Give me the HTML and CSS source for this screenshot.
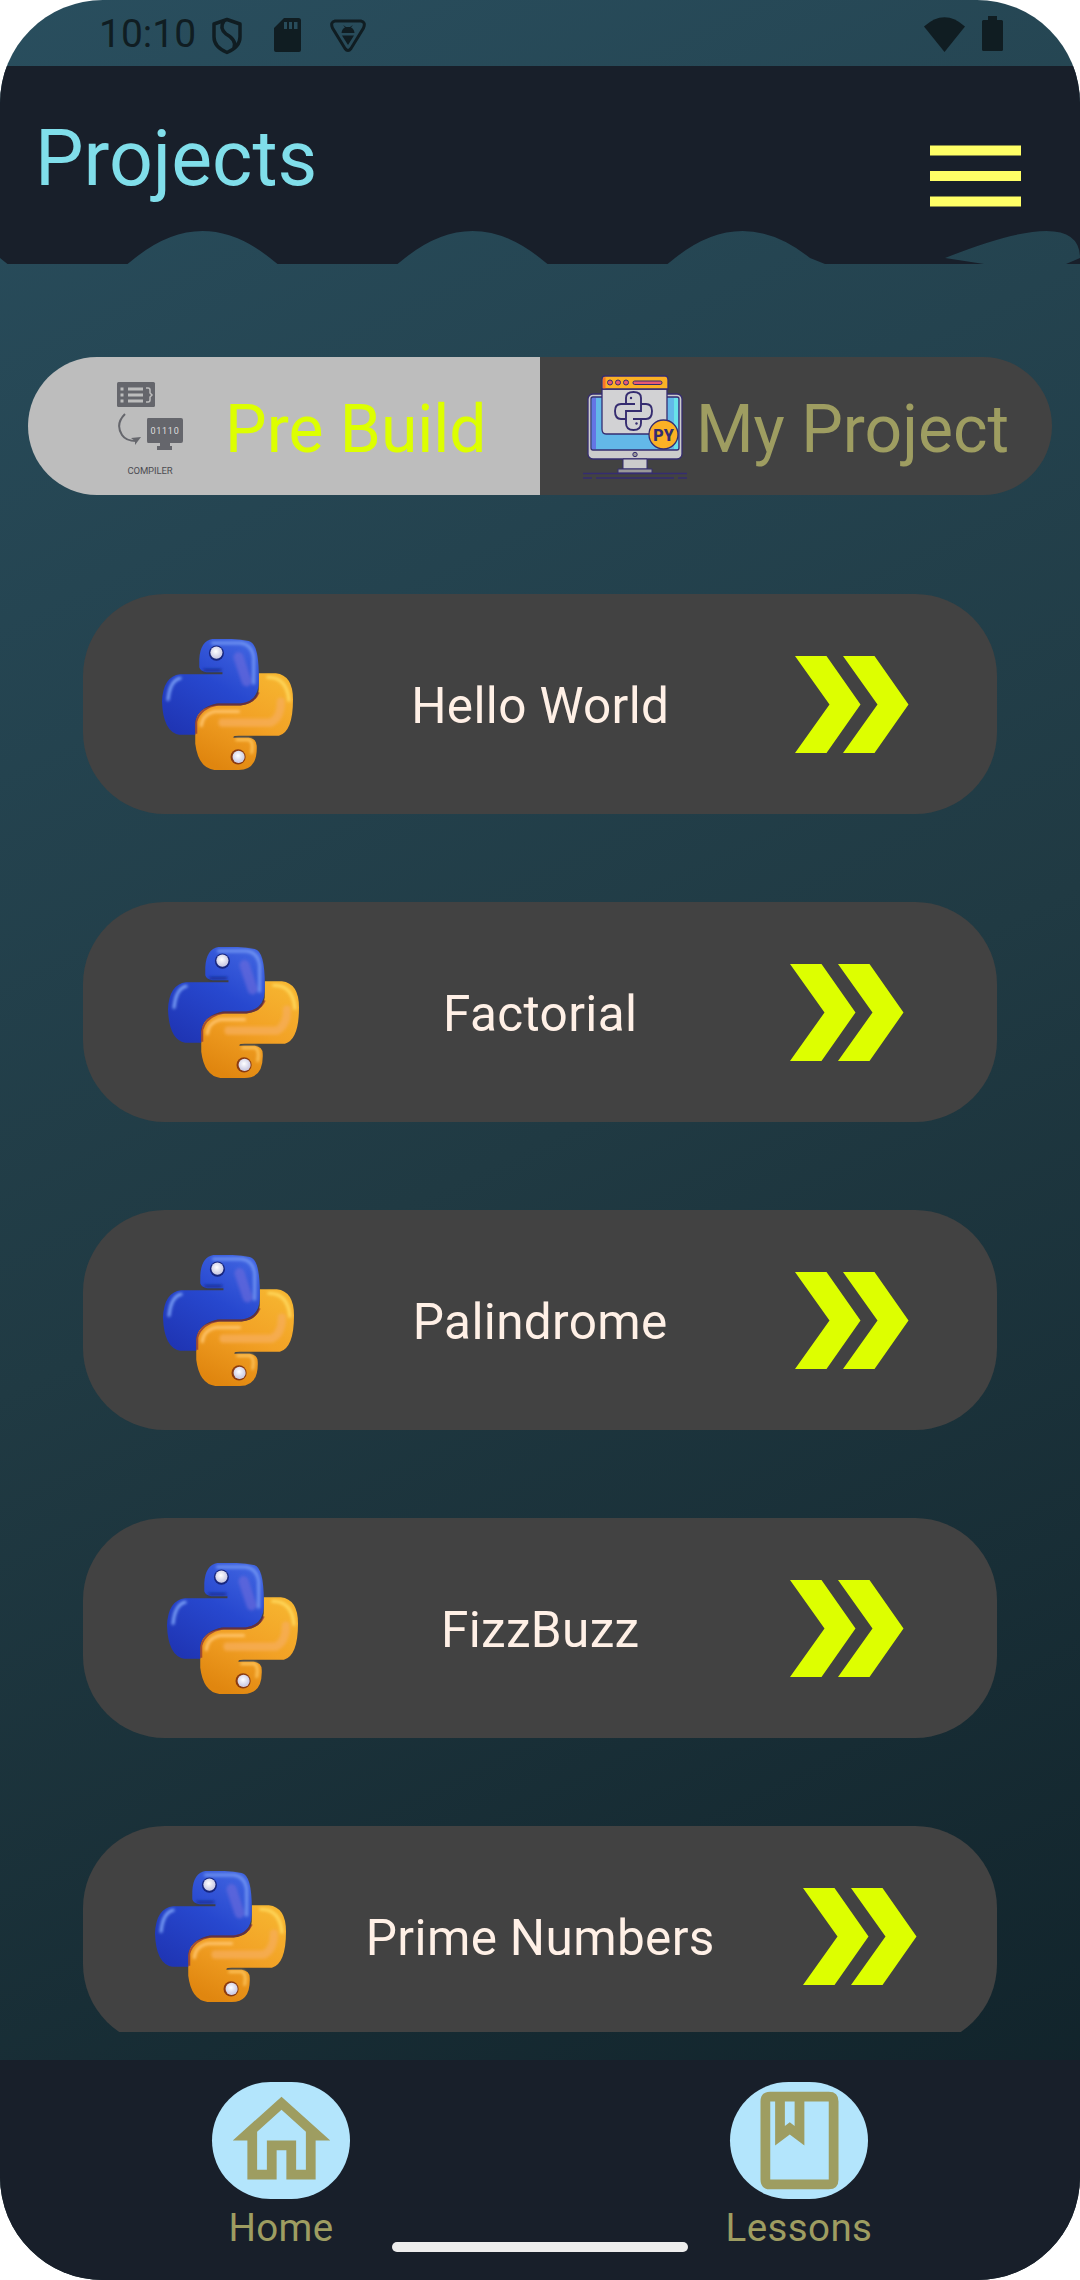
FILE: index.html
```html
<!DOCTYPE html>
<html lang="en">
<head>
<meta charset="utf-8">
<title>Projects</title>
<link rel="stylesheet" href="styles.css">
</head>
<body>
<svg class="defs" width="0" height="0" aria-hidden="true">
  <defs>
    <linearGradient id="blue" x1="0.8" y1="0" x2="0.2" y2="1">
      <stop offset="0" stop-color="#3f63e0"/><stop offset="0.45" stop-color="#2748cf"/><stop offset="1" stop-color="#1f35b4"/>
    </linearGradient>
    <linearGradient id="gold" x1="0.8" y1="0" x2="0.3" y2="1">
      <stop offset="0" stop-color="#f6b530"/><stop offset="0.5" stop-color="#f2a125"/><stop offset="1" stop-color="#e0860f"/>
    </linearGradient>
    <radialGradient id="pearl" cx="0.45" cy="0.4"><stop offset="0" stop-color="#fff"/><stop offset="1" stop-color="#cfcfe6"/></radialGradient>
    <filter id="soft" x="-20%" y="-20%" width="140%" height="140%"><feGaussianBlur stdDeviation="1.6"/></filter>
    <symbol id="python" viewBox="0 0 130 130">
      <path d="M96 34H113Q130 36 130 60Q130 92 116 96H76Q70 96 71 98H86Q94 99 94 106Q95 130 76 130H52Q36 128 33 104V84Q34 68 54 66H78Q95 64 96 50Z" fill="url(#gold)"/>
      <path d="M50 0Q38 2 37 20V28Q38 32 44 33H60V35H18Q1 37 0 62Q1 92 17 95H33V82Q36 68 54 64H78Q95 62 96 44Q97 4 86 2Q70-1 50 0Z" fill="url(#blue)"/>
      <path d="M34 94V82Q38 68 56 65H78Q92 63 96 53" fill="none" stroke="#7c263f" stroke-width="2" opacity=".65"/>
      <g fill="none" stroke-linecap="round" filter="url(#soft)">
        <path d="M6 60Q8 41 18 39" stroke="#7da2f7" stroke-width="3"/>
        <path d="M50 4H78Q89 5 91 18V44" stroke="#7194f2" stroke-width="3"/>
        <path d="M76 18L84 42" stroke="#6768dc" stroke-width="10" opacity=".7"/>
        <path d="M60 83H108Q118 78 118 62" stroke="#f6ad55" stroke-width="8" opacity=".8"/>
        <path d="M39 86Q40 75 52 72H76" stroke="#ffc46c" stroke-width="3"/>
        <path d="M105 38Q124 38 126 61" stroke="#ffd95d" stroke-width="3"/>
        <path d="M74 100H87Q91 103 89 113" stroke="#ffc860" stroke-width="2.500"/>
        <path d="M42 31H58" stroke="#15247f" stroke-width="2"/>
      </g>
      <circle cx="54" cy="14" r="7.500" fill="#17267f"/><circle cx="54" cy="13.500" r="6" fill="url(#pearl)"/>
      <circle cx="75.500" cy="117" r="7.500" fill="#8b3b10"/><circle cx="76" cy="117" r="6" fill="url(#pearl)"/>
    </symbol>
    <symbol id="chevrons" viewBox="0 0 114 97">
      <path d="M0 0H31.500L65.500 48.500L31.500 97H0L34.500 48.500ZM48 0H79.500L113.500 48.500L79.500 97H48L82.500 48.500Z" fill="#df0"/>
    </symbol>
  </defs>
</svg>
<div class="screen">
  <div class="status">
    <span class="clock">10:10</span>
    <svg class="shield" viewBox="0 0 30 38" width="30" height="38" fill="none" stroke="#101d22" stroke-width="3.500" stroke-linejoin="round"><path d="M15 2.500L28 7V20Q28 30 15 35.500Q2 30 2 20V7Z"/><path d="M12 4Q7 11 14 17Q25 23 22 31"/></svg>
    <svg class="sd" viewBox="0 0 27 34" width="27" height="34"><path fill="#101d22" fill-rule="evenodd" d="M10 0H24.500Q27 0 27 2.500V32Q27 34 25 34H2Q0 34 0 32V10ZM10 4V11H13V4ZM15 4V11H18V4ZM20 4V11H23.500V4Z"/></svg>
    <svg class="tri" viewBox="0 0 36 34" width="36" height="34"><path d="M5 2H31Q36 3 33.500 9L21 29.500Q18 33.500 15 29.500L2.500 9Q0 3 5 2Z" fill="none" stroke="#101d22" stroke-width="3"/><path d="M11.500 14Q12 9.500 15 8.500L13 6L16 8H20L23 6L21 8.500Q24 9.500 24.500 14ZM12 16.500H24L18 26Z" fill="#101d22"/></svg>
    <svg class="wifi" viewBox="0 0 41 35" width="41" height="35"><path d="M0 9.500Q20.500-9 41 9.500L20.500 35Z" fill="#101d22"/></svg>
    <svg class="battery" viewBox="0 0 21 35" width="21" height="35"><path d="M6 0H15V4H19.500Q21 4 21 5.500V33.500Q21 35 19.500 35H1.500Q0 35 0 33.500V5.500Q0 4 1.500 4H6Z" fill="#101d22"/></svg>
  </div>
  <header class="header">
    <svg class="waves" viewBox="0 0 1080 198" width="1080" height="198"><path fill="#181f2a" d="M0 0H1080V192Q1080 138 945 192L984 198H825L810 192Q742.500 138 675 192L667.500 198H547.500L540 192Q472.500 138 405 192L397.500 198H277.500L270 192Q202.500 138 135 192L127.500 198H7.500L0 192ZM1080 192V198H1066Z"/></svg>
    <h1 class="title">Projects</h1>
    <svg class="menu" viewBox="0 0 91 62" width="91" height="62"><path d="M0 0.500H91V10.500H0ZM0 26H91V36H0ZM0 51.500H91V61.500H0Z" fill="#ff6"/></svg>
  </header>
  <nav class="tabs">
    <div class="tab tab-on">
      <svg class="compiler" viewBox="0 0 66 94" width="66" height="94">
        <rect x="0" y="1" width="38" height="25" rx="1.500" fill="#65666c"/>
        <path d="M11 8H26M11 14H26M11 20H26" stroke="#bdbdbd" stroke-width="3"/>
        <path d="M5 6.500v3M5 12.500v3M5 18.500v3" stroke="#bdbdbd" stroke-width="3"/>
        <path d="M29 7h2q2 0 2 2v3l2 2-2 2v3q0 2-2 2h-2" fill="none" stroke="#bdbdbd" stroke-width="1.500"/>
        <path d="M8 33Q-2 43 5 54Q9 60 19 60" fill="none" stroke="#65666c" stroke-width="2"/><path d="M14 57L24 56L18 64V60Z" fill="#65666c"/>
        <path d="M31 37H64Q66 37 66 39V60Q66 62 64 62H53V65H55V69H40V65H43V62H31Q30 62 30 60V39Q30 37 31 37Z" fill="#65666c"/>
        <text x="48" y="53" class="bits" text-anchor="middle">01110</text>
        <text x="33" y="92.500" class="caption" text-anchor="middle" textLength="45">COMPILER</text>
      </svg>
      <span>Pre Build</span>
    </div>
    <div class="tab">
      <svg class="pc" viewBox="0 0 104 106" width="104" height="106">
        <rect x="5" y="19" width="94" height="65" rx="5" fill="#ccc" stroke="#352c70" stroke-width="1.300"/>
        <rect x="8" y="22" width="88" height="53" rx="2" fill="#63b8e8" stroke="#352c70" stroke-width="1.300"/>
        <path d="M9 23h4v51H9z" fill="#6475e5"/><path d="M91 23h4v51h-4z" fill="#68e2e9"/>
        <path d="M19 14H84V54Q84 59 80 59H23Q19 59 19 54Z" fill="#d2d2d4" stroke="#352c70" stroke-width="1.300"/>
        <path d="M22 1H82Q85 1 85 5V14H19V5Q19 1 22 1Z" fill="#fbb125" stroke="#352c70" stroke-width="1.300"/>
        <path d="M20 4.500Q20 2 22.500 2V13.300H20Z" fill="#f9722d"/>
        <g fill="#e85b72" stroke="#352c70"><circle cx="27" cy="7.500" r="2.500"/><circle cx="35" cy="7.500" r="2.500"/><circle cx="43" cy="7.500" r="2.500"/><rect x="50" y="6" width="29" height="3.500" rx="1.700"/></g>
        <g fill="none" stroke="#352c70" stroke-width="1.900"><path d="M52 29H38Q32 29 32 36Q32 44 38 44H43M43 29V23Q43 17 50.500 17Q58 17 58 23V36H43V48Q43 55 50.500 55Q58 55 58 48V44M50 44H63Q69 44 69 36Q69 29 63 29H58"/></g>
        <circle cx="48" cy="23" r="1.200" fill="#352c70"/><circle cx="53.500" cy="48.500" r="1.200" fill="#352c70"/>
        <circle cx="80.500" cy="59.500" r="14.500" fill="#fbb125" stroke="#352c70" stroke-width="1.300"/>
        <text x="80.500" y="65.500" class="py" text-anchor="middle">PY</text>
        <circle cx="52" cy="79.500" r="2.200" fill="#999" stroke="#352c70"/>
        <path d="M40 84H64V94H40Z" fill="#ccc" stroke="#352c70"/><path d="M35 94H69V98H35Z" fill="#999" stroke="#352c70"/>
        <path d="M0 98.500H104M0 103H9M13 103H91M95 103H104" stroke="#352c70" stroke-width="1.500"/>
      </svg>
      <span>My Project</span>
    </div>
  </nav>
  <main class="list">
    <article class="card"><svg class="snake"><use href="#python"/></svg><span class="name">Hello World</span><svg class="go"><use href="#chevrons"/></svg></article>
    <article class="card"><svg class="snake"><use href="#python"/></svg><span class="name">Factorial</span><svg class="go"><use href="#chevrons"/></svg></article>
    <article class="card"><svg class="snake"><use href="#python"/></svg><span class="name">Palindrome</span><svg class="go"><use href="#chevrons"/></svg></article>
    <article class="card"><svg class="snake"><use href="#python"/></svg><span class="name">FizzBuzz</span><svg class="go"><use href="#chevrons"/></svg></article>
    <article class="card"><svg class="snake"><use href="#python"/></svg><span class="name">Prime Numbers</span><svg class="go"><use href="#chevrons"/></svg></article>
  </main>
  <footer class="footer">
    <div class="dest"><div class="pill"><svg viewBox="0 0 24 24" width="117" height="117"><path fill="#9e9d61" d="M12 5.690l5 4.500V18h-2v-6H9v6H7v-7.810l5-4.500M12 3L2 12h3v8h6v-6h2v6h6v-8h3L12 3z"/></svg></div><span>Home</span></div>
    <div class="dest"><div class="pill"><svg viewBox="0 0 24 24" width="117" height="117"><path fill="#9e9d61" fill-rule="evenodd" d="M6 2H18Q20 2 20 4V20Q20 22 18 22H6Q4 22 4 20V4Q4 2 6 2ZM6 4V20H18V4H13V13L10 10.750L7 13V4ZM9 4V9L10 8.250L11 9V4Z"/></svg></div><span>Lessons</span></div>
    <div class="handle"></div>
  </footer>
</div>
</body>
</html>
```
FILE: styles.css
```css
* { box-sizing: border-box; }
body { margin: 0; background: #fff; font-family: Roboto, sans-serif; }
svg { display: block; flex: none; }
.defs { position: absolute; }
.screen { width: 1080px; height: 2280px; border-radius: 103px; overflow: hidden; display: flex; flex-direction: column; background: linear-gradient(154.650deg, #294e5e, #203a43 50%, #0f2027); }

.status { height: 66px; flex: none; display: flex; align-items: flex-start; padding-left: 99px; color: #101d22; }
.clock { width: 113px; font-size: 39px; line-height: 46px; margin-top: 11px; white-space: nowrap; }
.shield { margin-top: 17px; }
.sd { margin: 18px 0 0 32px; }
.tri { margin: 19px 0 0 29px; }
.wifi { margin: 17px 0 0 auto; }
.battery { margin: 16px 77px 0 17px; }

.header { height: 198px; flex: none; display: grid; grid-template-columns: 1fr auto; }
.waves { grid-area: 1 / 1 / 2 / 3; }
.title { grid-area: 1 / 1; margin: 47px 0 0 35px; font-size: 77px; line-height: 92px; font-weight: 400; color: #80deea; }
.menu { grid-area: 1 / 2; margin: 79px 59px 0 0; }

.tabs { flex: none; display: flex; height: 138px; margin: 93px 28px 0; border-radius: 69px; overflow: hidden; font-size: 66px; line-height: 78px; color: #9e9d61; }
.tab { flex: 1; display: flex; align-items: flex-start; background: #424242; white-space: nowrap; }
.tab-on { background: #bdbdbd; color: #df0; }
.tab span { margin-top: 34px; }
.compiler { margin: 24px 42px 0 89px; }
.pc { margin: 18px 9px 0 43px; }
.bits { font: 9px Roboto, sans-serif; letter-spacing: 0.700px; fill: #ddd; }
.caption { font: 9.500px Roboto, sans-serif; fill: #4c4c52; }
.py { font: 900 16px Roboto, sans-serif; fill: #352c70; }

.list { height: 1438px; flex: none; margin: 99px 83px 0; display: flex; flex-direction: column; gap: 88px; overflow: hidden; }
.card { height: 220px; flex: none; display: flex; align-items: center; border-radius: 82px; background: #424242; }
.card::before, .card::after { content: ""; flex: 1 1 0; }
.snake { width: 131px; height: 131px; margin: 1px 0 0 69.500px; }
.name { flex: 10 1 auto; text-align: center; font-size: 49.500px; line-height: 60px; letter-spacing: 0.350px; color: #fff0e6; white-space: nowrap; margin: 4px 76px 0 68px; }
.go { width: 114px; height: 97px; margin-right: 78px; }

.footer { flex: none; height: 220px; margin-top: 28px; padding: 22px 23px 0 21px; background: #181f2a; display: grid; grid-template-columns: 520px 516px; align-content: start; }
.dest { display: flex; flex-direction: column; align-items: center; font-size: 38.500px; line-height: 46px; color: #9e9d61; }
.pill { width: 138px; height: 117px; border-radius: 58.500px; background: #b3e5fc; display: flex; justify-content: center; }
.dest span { margin-top: 6px; letter-spacing: 0.400px; }
.handle { grid-column: 1 / 3; justify-self: center; width: 296px; height: 10px; border-radius: 5px; background: #ededed; margin: -9px 0 0 2px; }
```
